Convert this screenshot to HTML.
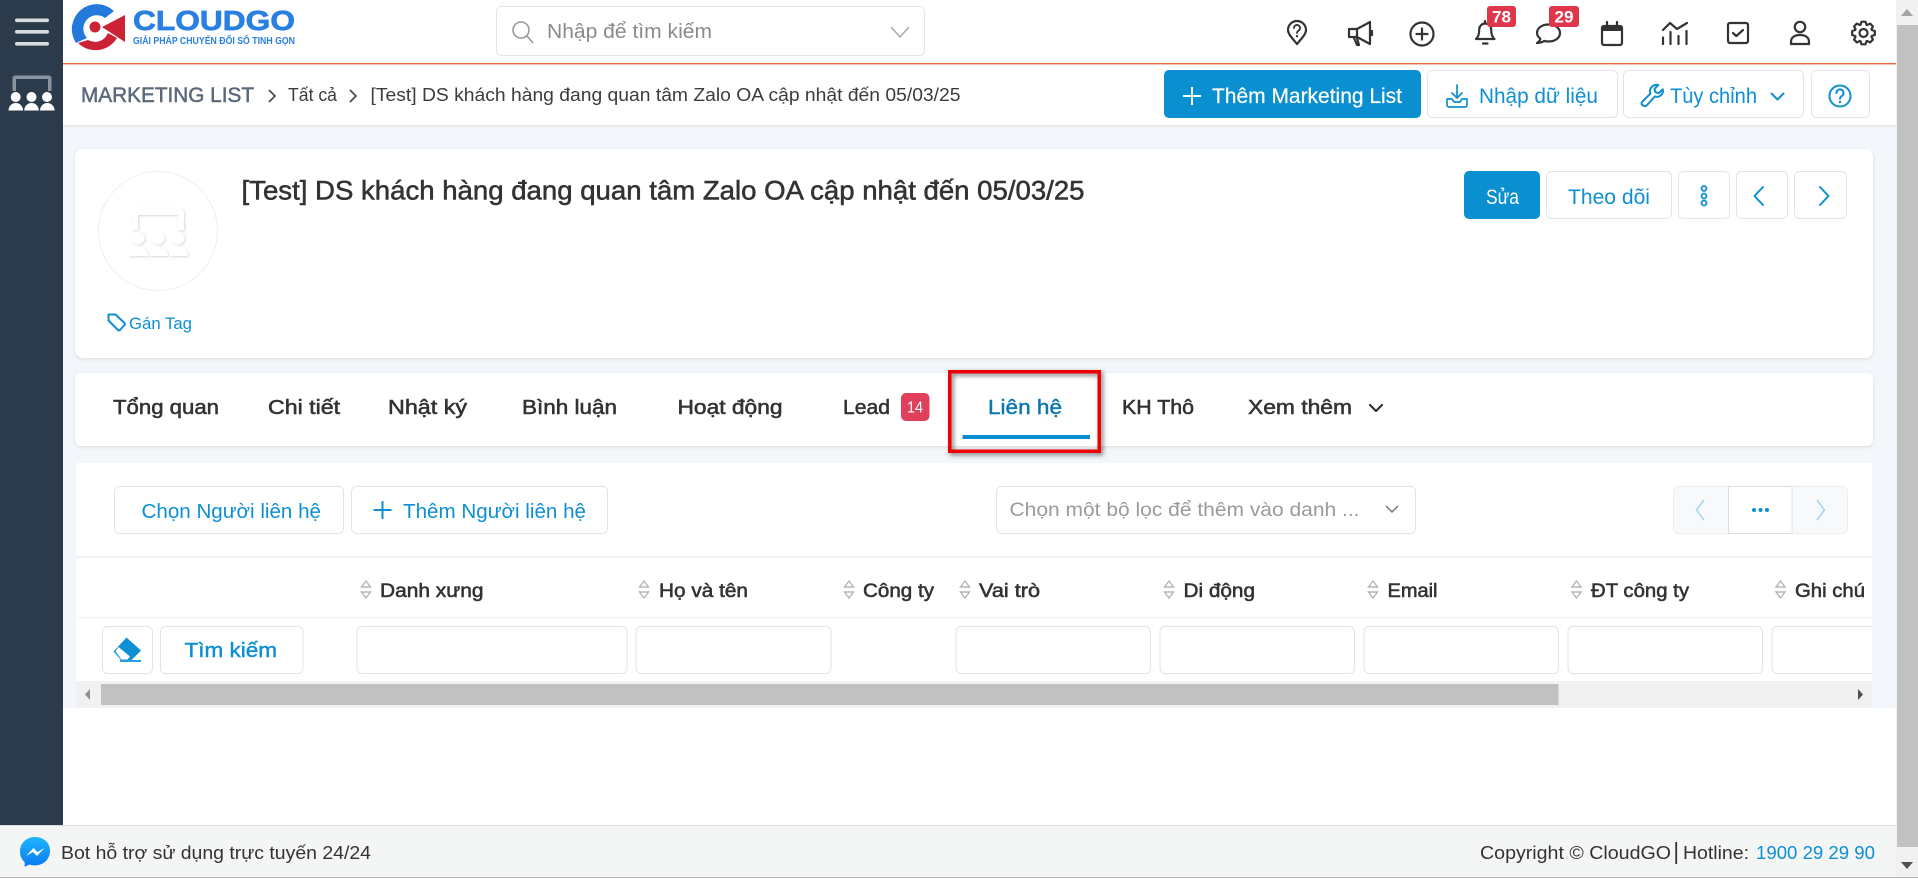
<!DOCTYPE html>
<html lang="vi"><head><meta charset="utf-8"><title>Marketing List</title>
<style>
html,body{margin:0;padding:0;width:1918px;height:878px;overflow:hidden;background:#fff}
svg{display:block;position:absolute;left:0;top:0}
text{font-family:"Liberation Sans","DejaVu Sans",sans-serif;white-space:pre}
.b{fill:#0d8fd3}.d{fill:#333}.s{stroke:#333;stroke-width:.55px}
.ic{fill:none;stroke:#333;stroke-width:2.200;stroke-linecap:round;stroke-linejoin:round}
.bl{fill:none;stroke:#0d8fd3;stroke-width:2;stroke-linecap:round;stroke-linejoin:round}
.btn{fill:#fff;stroke:#e2e5e8;stroke-width:1}
.inp{fill:#fff;stroke:#e2e4e6;stroke-width:1}
.sort{fill:none;stroke:#b5b5b5;stroke-width:1.400}
.th{font-size:19px;fill:#333;stroke:#333;stroke-width:.55px}
.tab{font-size:20px;fill:#333;stroke:#333;stroke-width:.55px}
</style></head><body>
<svg width="1918" height="878" viewBox="0 0 1918 878" xmlns="http://www.w3.org/2000/svg">
<defs>
<linearGradient id="mg" x1="0" y1="0" x2="0" y2="1"><stop offset="0" stop-color="#1fb6ff"/><stop offset="1" stop-color="#0a78f0"/></linearGradient>
<filter id="sh" x="-20%" y="-20%" width="140%" height="140%"><feDropShadow dx="1" dy="1" stdDeviation="1" flood-color="#999" flood-opacity=".38"/></filter>
<filter id="rs" x="-10%" y="-10%" width="125%" height="125%"><feDropShadow dx="2" dy="2" stdDeviation="2.500" flood-color="#000" flood-opacity=".55"/></filter>
<filter id="cs" x="-2%" y="-10%" width="104%" height="120%"><feDropShadow dx="0" dy="1" stdDeviation="1.500" flood-color="#b8c0c8" flood-opacity=".5"/></filter>
<clipPath id="tc"><rect x="76" y="560" width="1796" height="121"/></clipPath>
</defs>

<!-- backgrounds -->
<rect x="0" y="0" width="1918" height="878" fill="#fff"/>
<rect x="63" y="125" width="1833" height="583" fill="#f3f6fa"/>
<rect x="63" y="708" width="1833" height="117" fill="#fff"/>
<rect x="63" y="125" width="1833" height="1.500" fill="#e4e7ea"/>
<rect x="63" y="63" width="1833" height="1.400" fill="#e7673d"/>

<!-- sidebar -->
<rect x="0" y="0" width="63" height="825" fill="#2c3b4b"/>
<g fill="#d9dde0"><rect x="15" y="18.500" width="34" height="3.600" rx="1.800"/><rect x="15" y="30" width="34" height="3.600" rx="1.800"/><rect x="15" y="42" width="34" height="3.600" rx="1.800"/></g>
<path d="M12.500 91V78a2.500 2.500 0 0 1 2.500-2.500H49a2.500 2.500 0 0 1 2.500 2.500V91H48V79H16V91Z" fill="#8a949e"/>
<g fill="#fff">
<circle cx="15.700" cy="97" r="5"/><circle cx="31.500" cy="97" r="5"/><circle cx="47" cy="97" r="5"/>
<path d="M8.500 110.500a7.300 7.500 0 0 1 14.600 0Z"/><path d="M24.200 110.500a7.300 7.500 0 0 1 14.600 0Z"/><path d="M40 110.500a7.300 7.500 0 0 1 14.600 0Z"/>
</g>

<!-- logo -->
<path d="M114 11A25 25 0 0 0 76 43L87 38A13.500 13.500 0 0 1 105 18Z" fill="#2479dd"/>
<path d="M78 43A25 25 0 0 0 117 38L108 33A14 14 0 0 1 88 40Z" fill="#cc2235"/>
<path d="M102 27L125 15V42Z" fill="#cc2235"/>
<circle cx="95" cy="27" r="5.500" fill="#cc2235"/>
<text x="133" y="30" font-size="28" font-weight="700" fill="#2a80e0" stroke="#2a80e0" stroke-width=".7" textLength="162" lengthAdjust="spacingAndGlyphs">CLOUDGO</text>
<text x="133" y="44" font-size="10.500" font-weight="700" fill="#2a80e0" textLength="162" lengthAdjust="spacingAndGlyphs">GIẢI PHÁP CHUYỂN ĐỔI SỐ TINH GỌN</text>

<!-- search -->
<rect x="496.500" y="6.500" width="428" height="49" rx="5" fill="#fff" stroke="#e3e5e8"/>
<circle cx="521" cy="30" r="8" fill="none" stroke="#9a9a9a" stroke-width="1.600"/><path d="M527 36L533 43" stroke="#9a9a9a" stroke-width="1.600" fill="none"/>
<text x="547" y="38" font-size="20" fill="#8a8a8a" textLength="165" lengthAdjust="spacingAndGlyphs">Nhập để tìm kiếm</text>
<path d="M891 27L900 37L909 27" fill="none" stroke="#a5a5a5" stroke-width="1.400"/>

<!-- top icons -->
<g class="ic">
<path d="M1297 44C1292 38 1288 34 1288 30A9 9 0 0 1 1306 30C1306 34 1302 38 1297 44Z"/>
<path d="M1294 28a3 3 0 1 1 4.500 2.600c-1 .7-1.500 1.100-1.500 2.400" stroke-width="1.800"/><path d="M1297 36v.3"/>
<path d="M1349 29h8l13-7v22l-13-7h-8zM1357 29v8M1354 38l3 7h2l-2-7M1372 31v4"/>
<circle cx="1422" cy="34" r="11.500"/><path d="M1422 28.500v11M1416.500 34h11"/>
<path d="M1476 39c2.500-2 3.200-5 3.200-9.500a6 6 0 0 1 12 0c0 4.500.7 7.500 3.300 9.500zM1483 43.500h4.500M1485 21v2"/>
<path d="M1537 43c2-1 3-2.500 3.400-4.200-2-1.600-3.400-3.700-3.400-5.800 0-5 5-8.500 11.500-8.500S1560 28 1560 33s-5 8.500-11.500 8.500c-1.500 0-3-.2-4.300-.6-1.700 1.300-4.200 2.100-7.200 2.100Z"/>
<rect x="1602" y="26" width="20" height="19" rx="2"/><path d="M1607 22v4M1617 22v4"/>
<path d="M1663 30l7-7 7 6 10-6"/><path d="M1663 37.500v6.500M1670.500 32v12M1678.500 36v8M1686.500 31v13"/>
<rect x="1728" y="23" width="20" height="20" rx="2"/><path d="M1733 33l3.300 3 6.700-6"/>
<circle cx="1800" cy="27" r="5.200"/><path d="M1791 44v-2c0-5 4-7 9-7s9 2 9 7v2z"/>
<g transform="translate(1863.500 33)"><path d="M8.270-3L11.330-2L11.330 2L8.270 3L7.970 3.730L9.430 6.600L6.600 9.430L3.730 7.970L3 8.270L2 11.330L-2 11.330L-3 8.270L-3.730 7.970L-6.600 9.430L-9.430 6.600L-7.970 3.730L-8.270 3L-11.330 2L-11.330-2L-8.270-3L-7.970-3.730L-9.430-6.600L-6.600-9.430L-3.730-7.970L-3-8.270L-2-11.330L2-11.330L3-8.270L3.730-7.970L6.600-9.430L9.430-6.600L7.970-3.730Z"/><circle r="4"/></g>
</g>
<rect x="1602" y="26" width="20" height="5" fill="#333"/>
<rect x="1487" y="6" width="29" height="21" rx="3" fill="#e0364c"/>
<text x="1501.500" y="22.500" font-size="16.500" font-weight="700" fill="#fff" text-anchor="middle" textLength="19" lengthAdjust="spacingAndGlyphs">78</text>
<rect x="1549" y="6" width="30" height="21" rx="3" fill="#e0364c"/>
<text x="1564" y="22.500" font-size="16.500" font-weight="700" fill="#fff" text-anchor="middle" textLength="19" lengthAdjust="spacingAndGlyphs">29</text>

<!-- breadcrumb -->
<text x="81" y="102" font-size="21" fill="#5a6a7a" stroke="#5a6a7a" stroke-width=".5" textLength="173" lengthAdjust="spacingAndGlyphs">MARKETING LIST</text>
<path d="M269 90l6 6-6 6" fill="none" stroke="#444" stroke-width="1.600"/>
<text x="288" y="101" font-size="18" fill="#3c3c3c" textLength="49" lengthAdjust="spacingAndGlyphs">Tất cả</text>
<path d="M350 90l6 6-6 6" fill="none" stroke="#444" stroke-width="1.600"/>
<text x="370.500" y="101" font-size="18" fill="#3c3c3c" textLength="590" lengthAdjust="spacingAndGlyphs">[Test] DS khách hàng đang quan tâm Zalo OA cập nhật đến 05/03/25</text>

<!-- top right buttons -->
<rect x="1164" y="70" width="257" height="48" rx="5" fill="#0a8fd0"/>
<path d="M1192 87v18M1183 96h18" stroke="#fff" stroke-width="2" fill="none"/>
<text x="1212" y="103" font-size="21" fill="#fff" stroke="#fff" stroke-width=".2" textLength="190" lengthAdjust="spacingAndGlyphs">Thêm Marketing List</text>
<rect class="btn" x="1427.500" y="70.500" width="190" height="47" rx="5"/>
<g class="bl"><path d="M1457 85v13M1452 93l5 5 5-5" stroke-width="1.700"/><path d="M1447 99v6a2 2 0 0 0 2 2h16a2 2 0 0 0 2-2v-6h-5l-2 3h-6l-2-3z" stroke-width="1.700"/></g>
<text x="1479" y="103" font-size="21" class="b" textLength="119" lengthAdjust="spacingAndGlyphs">Nhập dữ liệu</text>
<rect class="btn" x="1623.500" y="70.500" width="180" height="47" rx="5"/>
<path class="bl" stroke-width="1.500" d="M1643.500 105.500a2.300 2.300 0 0 0 3.200 0l8-9c3.300 1 6-.3 7.500-2.800.8-1.400 1-3 .5-4.400l-3.900 3.800-3.400-.9-.9-3.400 3.800-3.800c-3.600-1-7.300 1.400-8.200 4.900-.3 1.400-.2 2.500.2 3.800l-8 8a2.300 2.300 0 0 0 .7 3.800Z"/>
<text x="1670" y="103" font-size="21" class="b" textLength="87" lengthAdjust="spacingAndGlyphs">Tùy chỉnh</text>
<path class="bl" stroke-width="1.700" d="M1771.500 93.500l6 6 6-6"/>
<rect class="btn" x="1811.500" y="70.500" width="58" height="47" rx="5"/>
<circle class="bl" cx="1840" cy="96" r="10.500"/>
<path class="bl" d="M1836.500 93a3.500 3.500 0 1 1 5.500 2.800c-1.300.9-2 1.500-2 2.900"/><circle cx="1840" cy="102" r="1.200" fill="#0d8fd3"/>

<!-- info card -->
<rect x="75" y="149" width="1798" height="209" rx="8" fill="#fff" filter="url(#cs)"/>
<circle cx="158" cy="231" r="59.500" fill="#fff" stroke="#eceeef"/>
<g fill="#fff" filter="url(#sh)">
<path d="M132 230V213a5 5 0 0 1 5-5H179a5 5 0 0 1 5 5V230H178V215H138V230Z"/>
<circle cx="138" cy="238" r="6.500"/><circle cx="158" cy="238" r="6.500"/><circle cx="178" cy="238" r="6.500"/>
<path d="M129 256a9.500 9 0 0 1 19 0Z"/><path d="M149 256a9.500 9 0 0 1 19 0Z"/><path d="M169 256a9.500 9 0 0 1 19 0Z"/>
</g>
<path class="bl" stroke-width="1.500" transform="translate(-.5 -2.500)" d="M109 317v6l9.500 9.500a1.500 1.500 0 0 0 2 0l4.500-5a1.500 1.500 0 0 0 0-2l-9-8.500h-6.500Z"/>
<text x="129" y="329" font-size="17" class="b" textLength="63" lengthAdjust="spacingAndGlyphs">Gán Tag</text>
<text x="241.500" y="199.500" font-size="27" class="d s" textLength="843" lengthAdjust="spacingAndGlyphs">[Test] DS khách hàng đang quan tâm Zalo OA cập nhật đến 05/03/25</text>

<rect x="1464" y="171" width="76" height="48" rx="5" fill="#0a8fd0"/>
<text x="1486" y="204" font-size="21" fill="#fff" textLength="33" lengthAdjust="spacingAndGlyphs">Sửa</text>
<rect class="btn" x="1546.500" y="171.500" width="125" height="47" rx="5"/>
<text x="1568" y="204" font-size="21" class="b" textLength="82" lengthAdjust="spacingAndGlyphs">Theo dõi</text>
<rect class="btn" x="1678.500" y="171.500" width="51" height="47" rx="5"/>
<g fill="none" stroke="#0d8fd3" stroke-width="1.800"><circle cx="1704" cy="188.500" r="2.500"/><circle cx="1704" cy="196" r="2.500"/><circle cx="1704" cy="203" r="2.500"/></g>
<rect class="btn" x="1736.500" y="171.500" width="51" height="47" rx="5"/>
<path class="bl" d="M1763 187l-8.500 9 8.500 9"/>
<rect class="btn" x="1794.500" y="171.500" width="52" height="47" rx="5"/>
<path class="bl" d="M1820 187l8.500 9-8.500 9"/>

<!-- tabs card -->
<rect x="75" y="373" width="1798" height="73" rx="6" fill="#fff" filter="url(#cs)"/>
<text class="tab" x="113" y="414" textLength="106" lengthAdjust="spacingAndGlyphs">Tổng quan</text>
<text class="tab" x="268" y="414" textLength="72" lengthAdjust="spacingAndGlyphs">Chi tiết</text>
<text class="tab" x="388" y="414" textLength="79" lengthAdjust="spacingAndGlyphs">Nhật ký</text>
<text class="tab" x="522" y="414" textLength="95" lengthAdjust="spacingAndGlyphs">Bình luận</text>
<text class="tab" x="677.500" y="414" textLength="105" lengthAdjust="spacingAndGlyphs">Hoạt động</text>
<text class="tab" x="843" y="414" textLength="47" lengthAdjust="spacingAndGlyphs">Lead</text>
<rect x="901" y="393" width="28.500" height="28" rx="5" fill="#e0405c"/>
<text x="915" y="412.500" font-size="15.500" fill="#fff" text-anchor="middle" textLength="16" lengthAdjust="spacingAndGlyphs">14</text>
<text x="988" y="414" font-size="20" fill="#0b78ad" stroke="#0b78ad" stroke-width=".45" textLength="74" lengthAdjust="spacingAndGlyphs">Liên hệ</text>
<rect x="962.500" y="435" width="127.500" height="4" fill="#0a8fd0"/>
<text class="tab" x="1122" y="414" textLength="72" lengthAdjust="spacingAndGlyphs">KH Thô</text>
<text class="tab" x="1248" y="414" textLength="104" lengthAdjust="spacingAndGlyphs">Xem thêm</text>
<path class="ic" d="M1370 405l6 6 6-6"/>

<!-- list section -->
<rect x="76" y="463" width="1796" height="245" fill="#fff"/>
<rect class="btn" x="114.500" y="486.500" width="229" height="47" rx="5"/>
<text x="141.500" y="518" font-size="20" class="b" textLength="179.500" lengthAdjust="spacingAndGlyphs">Chọn Người liên hệ</text>
<rect class="btn" x="351.500" y="486.500" width="256" height="47" rx="5"/>
<path d="M382.500 501v18M373.500 510h18" stroke="#0d8fd3" stroke-width="2" fill="none"/>
<text x="403" y="518" font-size="20" class="b" textLength="183" lengthAdjust="spacingAndGlyphs">Thêm Người liên hệ</text>

<rect class="inp" x="996.500" y="486.500" width="419" height="47" rx="5"/>
<text x="1009.500" y="516" font-size="19.500" fill="#9a9a9a" textLength="350" lengthAdjust="spacingAndGlyphs">Chọn một bộ lọc để thêm vào danh ...</text>
<path d="M1386 506l6 6 6-6" fill="none" stroke="#777" stroke-width="1.500"/>

<rect x="1673.500" y="486.500" width="174" height="47" rx="5" fill="#f8f9fa" stroke="#eceeef"/>
<rect x="1728.500" y="486.500" width="63.500" height="47" fill="#fff" stroke="#dcdfe2"/>
<path d="M1704 500l-7.500 10 7.500 10" fill="none" stroke="#9fd6f0" stroke-width="1.500"/>
<path d="M1817 500l7.500 10-7.500 10" fill="none" stroke="#9fd6f0" stroke-width="1.500"/>
<g fill="#0d8fd3"><circle cx="1754" cy="510" r="2"/><circle cx="1760.500" cy="510" r="2"/><circle cx="1767" cy="510" r="2"/></g>

<rect x="76" y="556" width="1796" height="2" fill="#eff1f3"/>
<rect x="76" y="617" width="1796" height="1" fill="#eff1f3"/>

<g clip-path="url(#tc)">
<g class="sort"><path d="M366 581l-4.500 6h9zM366 598l-4.500-6h9z"/><path d="M644 581l-4.500 6h9zM644 598l-4.500-6h9z"/><path d="M849 581l-4.500 6h9zM849 598l-4.500-6h9z"/><path d="M965 581l-4.500 6h9zM965 598l-4.500-6h9z"/><path d="M1169 581l-4.500 6h9zM1169 598l-4.500-6h9z"/><path d="M1373 581l-4.500 6h9zM1373 598l-4.500-6h9z"/><path d="M1576.500 581l-4.500 6h9zM1576.500 598l-4.500-6h9z"/><path d="M1780.500 581l-4.500 6h9zM1780.500 598l-4.500-6h9z"/></g>
<text class="th" x="380" y="597" textLength="103.500" lengthAdjust="spacingAndGlyphs">Danh xưng</text>
<text class="th" x="659" y="597" textLength="89" lengthAdjust="spacingAndGlyphs">Họ và tên</text>
<text class="th" x="863" y="597" textLength="71" lengthAdjust="spacingAndGlyphs">Công ty</text>
<text class="th" x="979" y="597" textLength="61" lengthAdjust="spacingAndGlyphs">Vai trò</text>
<text class="th" x="1183.500" y="597" textLength="71.500" lengthAdjust="spacingAndGlyphs">Di động</text>
<text class="th" x="1387.500" y="597" textLength="50" lengthAdjust="spacingAndGlyphs">Email</text>
<text class="th" x="1591" y="597" textLength="98" lengthAdjust="spacingAndGlyphs">ĐT công ty</text>
<text class="th" x="1795" y="597" textLength="70" lengthAdjust="spacingAndGlyphs">Ghi chú</text>

<rect class="btn" x="102.500" y="626.500" width="50" height="47" rx="5"/>
<path d="M126.500 637.500L141 650.500L131.500 660H121L113.500 651.500Z" fill="#0d8fd3"/>
<path d="M118.500 647L130 656.500L127.500 659.500H121.500L115.500 651.500Z" fill="#fff"/>
<path d="M120 661H141" stroke="#0d8fd3" stroke-width="1.800" fill="none"/>
<rect class="btn" x="160.500" y="626.500" width="142.500" height="47" rx="5"/>
<text x="184.500" y="657" font-size="20.500" fill="#0d8fd3" stroke="#0d8fd3" stroke-width=".45" textLength="92.500" lengthAdjust="spacingAndGlyphs">Tìm kiếm</text>
<rect class="inp" x="357" y="626.500" width="270" height="47" rx="5"/>
<rect class="inp" x="636" y="626.500" width="195" height="47" rx="5"/>
<rect class="inp" x="956" y="626.500" width="194.500" height="47" rx="5"/>
<rect class="inp" x="1160" y="626.500" width="194.500" height="47" rx="5"/>
<rect class="inp" x="1364" y="626.500" width="194.500" height="47" rx="5"/>
<rect class="inp" x="1568" y="626.500" width="194.500" height="47" rx="5"/>
<rect class="inp" x="1772" y="626.500" width="194.500" height="47" rx="5"/>
</g>

<!-- horizontal scrollbar -->
<rect x="76" y="681" width="1796" height="27" fill="#f1f1f1"/>
<rect x="101" y="684" width="1457.500" height="21" fill="#c1c1c1"/>
<path d="M90 689l-5 5.500 5 5.500z" fill="#909090"/>
<path d="M1858 689l5 5.500-5 5.500z" fill="#505050"/>

<!-- footer -->
<rect x="0" y="825" width="1896" height="52" fill="#f4f6f6"/>
<rect x="0" y="825" width="1896" height="1" fill="#dcdcdc"/>
<rect x="0" y="877" width="1918" height="1" fill="#b5b5b5"/>
<path d="M35 837c-8.500 0-15 6.200-15 14.500 0 4.400 1.800 8.100 4.700 10.700v4.700l4.500-2.400c1.800.6 3.700.9 5.800.9 8.500 0 15-6.200 15-14.500S43.500 837 35 837Z" fill="url(#mg)"/>
<path d="M26 856l7.500-8 4 4 7-4-7.500 8-4-4z" fill="#fff"/>
<text x="61" y="859" font-size="18.500" fill="#333" textLength="310" lengthAdjust="spacingAndGlyphs">Bot hỗ trợ sử dụng trực tuyến 24/24</text>
<text x="1480" y="859" font-size="18.500" fill="#333" textLength="191" lengthAdjust="spacingAndGlyphs">Copyright © CloudGO</text>
<rect x="1675.300" y="842" width="1.800" height="22" fill="#333"/>
<text x="1683" y="859" font-size="18.500" fill="#333" textLength="66" lengthAdjust="spacingAndGlyphs">Hotline:</text>
<text x="1756" y="859" font-size="18.500" class="b" textLength="119" lengthAdjust="spacingAndGlyphs">1900 29 29 90</text>

<!-- red highlight -->
<rect x="949.750" y="371.750" width="149.500" height="79.500" fill="none" stroke="#f00000" stroke-width="3.500" filter="url(#rs)"/>

<!-- page scrollbar -->
<rect x="1896" y="0" width="22" height="877" fill="#f1f1f1"/>
<rect x="1897" y="25" width="21" height="822" fill="#c1c1c1"/>
<path d="M1907 9l-6 7h12z" fill="#a3a3a3"/>
<path d="M1901 862h12l-6 7z" fill="#505050"/>
</svg>
</body></html>
